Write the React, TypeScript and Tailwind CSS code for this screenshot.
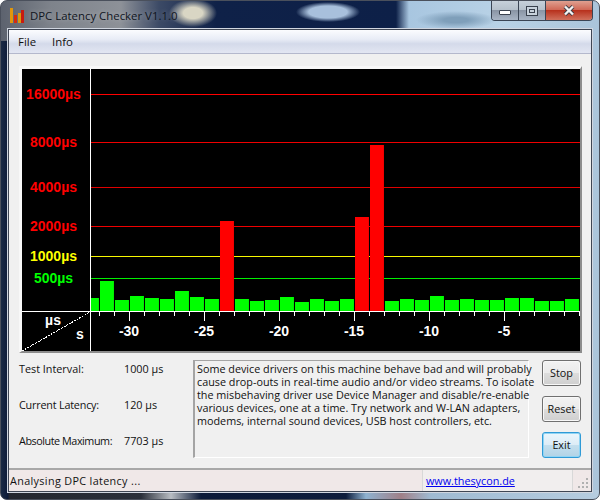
import React from "react";

const bars: [number, number, number, boolean?][] = [
  [91, 8, 298], [100, 14, 281], [115, 14, 300], [130, 14, 296], [145, 14, 298], [160, 14, 299],
  [175, 14, 291], [190, 14, 297], [205, 14, 299], [220, 14, 221, true], [235, 14, 299], [250, 14, 301],
  [265, 14, 300], [280, 14, 297], [295, 14, 302], [310, 14, 299], [325, 14, 301], [340, 14, 299],
  [355, 14, 217, true], [370, 14, 145, true], [385, 14, 301], [400, 14, 299], [415, 14, 300], [430, 14, 296],
  [445, 14, 300], [460, 14, 299], [475, 14, 300], [490, 14, 300], [505, 14, 298], [520, 14, 298],
  [535, 14, 301], [550, 14, 301], [565, 14, 299],
];

const levels = [
  { y: 94, label: "16000µs", color: "#ff0000", line: "#ff0000" },
  { y: 142, label: "8000µs", color: "#ff0000", line: "#f00000" },
  { y: 187, label: "4000µs", color: "#ff0000", line: "#e00000" },
  { y: 226, label: "2000µs", color: "#ff0000", line: "#f00000" },
  { y: 256, label: "1000µs", color: "#ffff00", line: "#f8f800" },
  { y: 278, label: "500µs", color: "#00ff00", line: "#00f000" },
];

const ticks = Array.from({ length: 33 }, (_, i) => 99 + i * 15);
const longTicks = [129, 204, 279, 354, 429, 504];
const xLabels = [
  { x: 129, t: "-30" }, { x: 204, t: "-25" }, { x: 279, t: "-20" },
  { x: 354, t: "-15" }, { x: 429, t: "-10" }, { x: 504, t: "-5" },
];

const textLines = [
  "Some device drivers on this machine behave bad and will probably",
  "cause drop-outs in real-time audio and/or video streams. To isolate",
  "the misbehaving driver use Device Manager and disable/re-enable",
  "various devices, one at a time. Try network and W-LAN adapters,",
  "modems, internal sound devices, USB host controllers, etc.",
];

const stats = [
  { a: "Test Interval:", b: "1000 µs", cls: "w-[105px]" },
  { a: "Current Latency:", b: "120 µs", cls: "w-[105px] tracking-[-0.2px]" },
  { a: "Absolute Maximum:", b: "7703 µs", cls: "w-[105px] tracking-[-0.45px]" },
];

function Btn({ children, primary }: { children: React.ReactNode; primary?: boolean }) {
  return primary ? (
    <button className="w-[39px] h-[26px] rounded-[3px] border border-[#2f9ad6] shadow-[inset_0_0_0_1px_#8fd4f4] bg-[linear-gradient(#eaf6fc_0%,#dcecf6_50%,#c4dfee_50%,#b2d3e6_100%)] text-[#111]">
      {children}
    </button>
  ) : (
    <button className="w-[39px] h-[26px] rounded-[3px] border border-[#707070] shadow-[inset_0_0_0_1px_#f8f8f8] bg-[linear-gradient(#f2f2f2_0%,#ebebeb_50%,#dddddd_50%,#cfcfcf_100%)] text-[#111]">
      {children}
    </button>
  );
}

export default function App() {
  return (
    <div className="w-[600px] h-[500px] bg-white overflow-hidden">
      <div className="w-[600px] h-[500px] rounded-[7px] border border-[#4a505c] overflow-hidden flex flex-col px-[7px] pb-[7px] font-['Open_Sans',sans-serif] text-[10.8px] text-[#111] [background:linear-gradient(90deg,#1a2a45_0px,#0d1a38_7px,transparent_8px)_left_40px/8px_460px_no-repeat,linear-gradient(90deg,#23262e_0px,#2a2f3a_140px,#b8bcc2_170px,#0c1a38_200px,#0d1c3c_345px,#8fb2d0_365px,#a08088_400px,#9fbad2_430px,#b7cde0_600px)_left_bottom/100%_9px_no-repeat,radial-gradient(ellipse_24px_14px_at_192px_12px,#d9d6c4_40%,transparent_100%),radial-gradient(ellipse_32px_10px_at_327px_11px,#a8c0dc_60%,transparent_100%),radial-gradient(ellipse_40px_9px_at_455px_19px,#7f9fba_30%,transparent_100%),linear-gradient(90deg,#5c626e_0px,#7e838b_50px,#8d9198_120px,#3c4a66_158px,#0f2148_215px,#0d2048_395px,#a8c6e0_408px,#b9d2e6_500px,#aac4da_600px)]">
        <div className="h-[28px] shrink-0 flex items-center">
          <svg width="14" height="16" viewBox="0 0 14 16" className="ml-[2px] mt-[2px] shrink-0">
            <rect x="0" y="0" width="3" height="15" fill="#e0960c" />
            <rect x="4" y="7" width="3" height="8" fill="#d62a10" />
            <rect x="8" y="5" width="3" height="10" fill="#d89a10" />
            <rect x="11" y="2" width="3" height="13" fill="#c81c10" />
          </svg>
          <span className="ml-[6px] mt-[1px] text-[11.4px] text-[#10151e] [text-shadow:0_0_5px_#ffffff66]">DPC Latency Checker V1.1.0</span>
          <div className="ml-auto self-start flex h-[20px] mr-[-1px] border border-t-0 border-[#3a4454] rounded-b-[4px] overflow-hidden">
            <div className="w-[27px] border-r border-[#3a4454] flex items-center justify-center bg-[linear-gradient(#c6d0da_0%,#b4bfca_50%,#8a95a5_50%,#a8b4c4_100%)]">
              <div className="w-[12px] h-[5px] mt-[4px] bg-white border border-[#39414e] rounded-[1px]" />
            </div>
            <div className="w-[27px] border-r border-[#3a4454] flex items-center justify-center bg-[linear-gradient(#c6d0da_0%,#b4bfca_50%,#8a95a5_50%,#a8b4c4_100%)]">
              <div className="w-[12px] h-[10px] border border-[#39414e] bg-[#c8d2dc] flex items-center justify-center">
                <div className="w-[6px] h-[4px] border border-[#39414e]" />
              </div>
            </div>
            <div className="w-[46px] flex items-center justify-center bg-[linear-gradient(#dfa090_0%,#d06a58_45%,#b8321e_50%,#d0705c_100%)]">
              <svg width="12" height="11" viewBox="0 0 12 11">
                <path d="M2 1.5 L10 9.5 M10 1.5 L2 9.5" stroke="#3c3c44" strokeWidth="4" />
                <path d="M2 1.5 L10 9.5 M10 1.5 L2 9.5" stroke="#f4f4f4" strokeWidth="2.4" />
              </svg>
            </div>
          </div>
        </div>

        <div className="flex-1 flex flex-col border border-[#3f4654] bg-[#f0f0f0] shadow-[0_0_0_1px_#d0d6e0]">
          <div className="h-[24px] shrink-0 flex items-center gap-[16px] pl-[9px] text-[11.4px] bg-[linear-gradient(#fbfcfe_0%,#e8ecf6_40%,#d4daea_60%,#e2e6f2_100%)] border-b border-[#b4b8cc]">
            <span>File</span>
            <span>Info</span>
          </div>

          <div className="flex-1 flex flex-col pl-[10px] pr-[10px] pt-[12px]">
            <div className="w-[563px] h-[287px] border-l-[3px] border-t-[3px] border-r-[2px] border-b-[2px] border-l-[#f8f8f8] border-t-[#f8f8f8] border-r-[#8c8c8c] border-b-[#8c8c8c] bg-black">
              <svg width="558" height="282" viewBox="22 69 558 282" className="block" shapeRendering="crispEdges">
                {levels.map((l) => (
                  <rect key={l.y} x="90" y={l.y} width="490" height="1" fill={l.line} />
                ))}
                {bars.map(([x, w, top, red]) => (
                  <g key={x}>
                    <rect x={x} y={top} width={w} height={311 - top} fill={red ? "#f00000" : "#00f000"} />
                    <rect x={x} y={top} width={w - 1} height={310 - top} fill={red ? "#ff0000" : "#00ff00"} />
                  </g>
                ))}
                <rect x="90" y="69" width="1" height="282" fill="#ffffff" />
                <rect x="22" y="311" width="558" height="1" fill="#ffffff" />
                {ticks.map((x) => (
                  <rect key={x} x={x} y="312" width="1" height={longTicks.includes(x) ? 9 : 4} fill="#ffffff" />
                ))}
                <line x1="22" y1="351" x2="90" y2="312" stroke="#ffffff" strokeWidth="1" strokeDasharray="2 1" />
                <g fontFamily="'Liberation Sans', Arial, sans-serif" fontWeight="700" fontSize="14" textAnchor="middle">
                  {levels.map((l) => (
                    <text key={l.label} x="53.5" y={l.y + 5} fill={l.color}>{l.label}</text>
                  ))}
                  {xLabels.map((l) => (
                    <text key={l.t} x={l.x} y="336" fill="#ffffff">{l.t}</text>
                  ))}
                  <text x="53" y="325" fill="#ffffff">µs</text>
                  <text x="80" y="339" fill="#ffffff">s</text>
                </g>
              </svg>
            </div>

            <div className="flex mt-[7px] h-[98px]">
              <div className="w-[175px] pt-[1px] flex flex-col gap-[20px]">
                {stats.map((s) => (
                  <div key={s.a} className="flex h-[16px] items-center whitespace-nowrap">
                    <span className={s.cls}>{s.a}</span>
                    <span>{s.b}</span>
                  </div>
                ))}
              </div>
              <div className="w-[336px] h-[98px] border-l-2 border-t border-l-[#a4a4a4] border-t-[#a4a4a4] border-r border-b border-r-white border-b-white pl-[2px] pt-[1px] leading-[13px] whitespace-nowrap">
                {textLines.map((t) => (
                  <div key={t}>{t}</div>
                ))}
              </div>
              <div className="ml-[13px] flex flex-col gap-[10px]">
                <Btn>Stop</Btn>
                <Btn>Reset</Btn>
                <Btn primary>Exit</Btn>
              </div>
            </div>
          </div>

          <div className="h-[23px] shrink-0 flex items-stretch border-t-2 border-[#a8a8a8] bg-[#f0e8e8]">
            <div className="w-[413px] pl-[1px] pt-[1px] flex items-center tracking-[0.35px]">Analysing DPC latency ...</div>
            <div className="w-[151px] pl-[3px] pt-[1px] flex items-center border-l border-r border-[#d8d8d8] bg-[#f1eeee]">
              <span className="text-[#0000ee] underline">www.thesycon.de</span>
            </div>
            <div className="flex-1 flex items-end justify-end pr-[2px] pb-[2px]">
              <svg width="11" height="11" viewBox="0 0 11 11" shapeRendering="crispEdges">
                {[[8, 0], [8, 4], [4, 4], [8, 8], [4, 8], [0, 8]].map(([x, y]) => (
                  <rect key={`${x}-${y}`} x={x} y={y} width="2" height="2" fill="#b0b0b0" />
                ))}
              </svg>
            </div>
          </div>
        </div>
      </div>
    </div>
  );
}
